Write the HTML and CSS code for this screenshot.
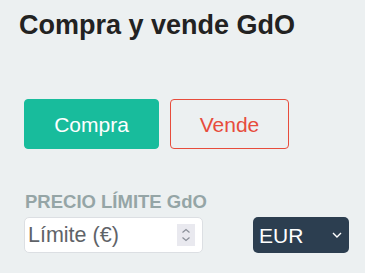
FILE: index.html
```html
<!DOCTYPE html>
<html lang="es">
<head>
<meta charset="utf-8">
<title>Compra y vende GdO</title>
<link rel="stylesheet" href="styles.css">
</head>
<body>
<div class="page">
  <h3 class="title">Compra y vende GdO</h3>
  <div class="form">
    <div class="actions">
      <button class="btn btn-buy" type="button">Compra</button>
      <button class="btn btn-sell" type="button">Vende</button>
    </div>
    <label class="label" for="limit">PRECIO LÍMITE GdO</label>
    <div class="row">
      <div class="input-box">
        <input id="limit" class="input" type="text" placeholder="Límite (€)">
        <span class="spin" aria-hidden="true">
          <svg width="10" height="14" viewBox="0 0 10 14"><path d="M1.5 4.5 L5 1.5 L8.5 4.5" fill="none" stroke="#8a8f98" stroke-width="1.2"/><path d="M1.5 9.5 L5 12.5 L8.5 9.5" fill="none" stroke="#8a8f98" stroke-width="1.2"/></svg>
        </span>
      </div>
      <div class="select">
        <span class="select-text">EUR</span>
        <svg class="chev" width="10" height="6" viewBox="0 0 10 6"><path d="M1 1 L5 5 L9 1" fill="none" stroke="#ffffff" stroke-width="1.4"/></svg>
      </div>
    </div>
  </div>
</div>
</body>
</html>
```

FILE: styles.css
```css
html, body {
  margin: 0;
  padding: 0;
  background: #ecf0f1;
}
body {
  font-family: "Liberation Sans", Arial, sans-serif;
  color: #212529;
}
.page {
  padding: 9px 0 0 19px;
}
.title {
  margin: 0;
  font-size: 27px;
  line-height: 32px;
  font-weight: 700;
  color: #222222;
}
.form {
  padding-left: 5px;
  display: flex;
  flex-direction: column;
}
.actions {
  margin-top: 58px;
  display: flex;
  gap: 11px;
}
.btn {
  height: 50px;
  border-radius: 4px;
  font-family: "Liberation Sans", Arial, sans-serif;
  font-size: 21px;
  line-height: 25px;
  padding: 0;
  cursor: pointer;
}
.btn-buy {
  width: 135px;
  background: #18bc9c;
  color: #ffffff;
  border: 1px solid #18bc9c;
}
.btn-sell {
  width: 119px;
  background: transparent;
  color: #e74c3c;
  border: 1px solid #e74c3c;
}
.label {
  margin-top: 42px;
  font-size: 18.5px;
  line-height: 22px;
  font-weight: 700;
  color: #95a5a6;
  padding-left: 1px;
}
.row {
  margin-top: 4px;
  display: flex;
  align-items: center;
  gap: 50px;
}
.input-box {
  box-sizing: border-box;
  width: 179px;
  height: 36px;
  background: #ffffff;
  border: 1px solid #dcdfe3;
  border-radius: 5px;
  display: flex;
  align-items: center;
  padding: 0 7px 0 3px;
}
.input {
  flex: 1;
  min-width: 0;
  border: 0;
  outline: 0;
  background: transparent;
  padding: 0;
  font-family: "Liberation Sans", Arial, sans-serif;
  font-size: 21.5px;
  line-height: 25px;
  color: #333333;
}
.input::placeholder {
  color: #5f6368;
  opacity: 1;
}
.spin {
  width: 18px;
  height: 22px;
  background: #e9e9ef;
  display: flex;
  align-items: center;
  justify-content: center;
}
.select {
  box-sizing: border-box;
  width: 96px;
  height: 36px;
  background: #2c3e50;
  border-radius: 5px;
  display: flex;
  align-items: center;
  justify-content: space-between;
  padding: 0 7px 0 6px;
  color: #ffffff;
}
.select-text {
  font-size: 21px;
  line-height: 25px;
}
.chev {
  display: block;
}
```
